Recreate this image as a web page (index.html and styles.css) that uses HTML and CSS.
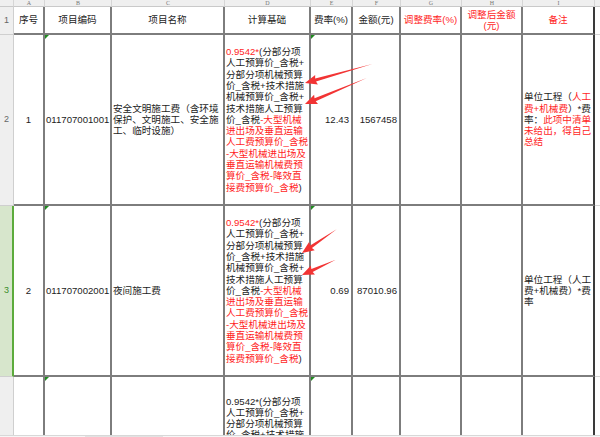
FILE: index.html
```html
<!DOCTYPE html>
<html lang="zh">
<head>
<meta charset="utf-8">
<link rel="stylesheet" href="styles.css">
</head>
<body>
<div class="sheet">
  <div class="ch corner"></div>
  <div class="ch">A</div><div class="ch">B</div><div class="ch">C</div><div class="ch">D</div><div class="ch">E</div><div class="ch">F</div><div class="ch">G</div><div class="ch">H</div><div class="ch">I</div><div class="ch last"></div>

  <div class="rh">1</div>
  <div class="c ctr">序号</div>
  <div class="c ctr">项目编码</div>
  <div class="c ctr">项目名称</div>
  <div class="c ctr">计算基础</div>
  <div class="c ctr">费率(%)</div>
  <div class="c ctr">金额(元)</div>
  <div class="c ctr r">调整费率(%)</div>
  <div class="c ctr r"><div class="tc">调整后金额<br>(元)</div></div>
  <div class="c ctr r edge">备注</div>
  <div class="x"></div>

  <div class="rh">2</div>
  <div class="c ctr">1</div>
  <div class="c m">011707001001</div>
  <div class="c"><div>安全文明施工费（含环境<br>保护、文明施工、安全施<br>工、临时设施）</div></div>
  <div class="c"><div><span class="r">0.9542*</span>(分部分项<br>人工预算价_含税+<br>分部分项机械预算<br>价_含税+技术措施<br>机械预算价_含税+<br>技术措施人工预算<br>价_含税<span class="r">-大型机械<br>进出场及垂直运输<br>人工费预算价_含税<br>-大型机械进出场及<br>垂直运输机械费预<br>算价_含税-降效直<br>接费预算价_含税</span>)</div></div>
  <div class="c num m">12.43</div>
  <div class="c num">1567458</div>
  <div class="c"></div>
  <div class="c"></div>
  <div class="c edge"><div>单位工程（<span class="r">人工</span><br><span class="r">费+机械费</span>）*费<br>率：<span class="r">此项中清单</span><br><span class="r">未给出，得自己</span><br><span class="r">总结</span></div></div>
  <div class="x"></div>

  <div class="rh sel">3</div>
  <div class="c ctr">2</div>
  <div class="c m">011707002001</div>
  <div class="c">夜间施工费</div>
  <div class="c"><div><span class="r">0.9542*</span>(分部分项<br>人工预算价_含税+<br>分部分项机械预算<br>价_含税+技术措施<br>机械预算价_含税+<br>技术措施人工预算<br>价_含税<span class="r">-大型机械<br>进出场及垂直运输<br>人工费预算价_含税<br>-大型机械进出场及<br>垂直运输机械费预<br>算价_含税-降效直<br>接费预算价_含税</span>)</div></div>
  <div class="c num m">0.69</div>
  <div class="c num">87010.96</div>
  <div class="c"></div>
  <div class="c"></div>
  <div class="c edge"><div>单位工程（人工<br>费+机械费）*费<br>率</div></div>
  <div class="x"></div>

  <div class="rh"></div>
  <div class="c ctr"></div>
  <div class="c m"></div>
  <div class="c"></div>
  <div class="c"><div>0.9542*(分部分项<br>人工预算价_含税+<br>分部分项机械预算<br>价_含税+技术措施<br>机械预算价_含税+<br>技术措施人工预算<br>价_含税-大型机械<br>进出场及垂直运输<br>人工费预算价_含税<br>-大型机械进出场及<br>垂直运输机械费预<br>算价_含税-降效直<br>接费预算价_含税)</div></div>
  <div class="c num m"></div>
  <div class="c num"></div>
  <div class="c"></div>
  <div class="c"></div>
  <div class="c edge"></div>
  <div class="x"></div>
</div>
<div class="bar"><div class="seg"></div></div>

<svg class="arrows" width="600" height="437" viewBox="0 0 600 437">
  <g fill="#f23434">
    <polygon transform="translate(305 83) rotate(-15.8)" points="0,0 12,-5 11,-1.6 70,0 11,1.6 12,5"/>
    <polygon transform="translate(305 104) rotate(-22.8)" points="0,0 12,-5 11,-1.6 67,0 11,1.6 12,5"/>
    <polygon transform="translate(302 253) rotate(-34.4)" points="0,0 12,-5 11,-1.6 42,0 11,1.6 12,5"/>
    <polygon transform="translate(302 275) rotate(-24.4)" points="0,0 12,-5 11,-1.6 37,0 11,1.6 12,5"/>
  </g>
</svg>
</body>
</html>
```
FILE: styles.css
```css
* { box-sizing: border-box; margin: 0; padding: 0; }
html, body { width: 600px; height: 437px; overflow: hidden; background: #fff; }
body {
  font-family: "Liberation Sans", "Noto Sans CJK SC", sans-serif;
  font-size: 9.6px;
  line-height: 11.3px;
  color: #1c1c1c;
  display: flex;
  flex-direction: column;
  position: relative;
}
.sheet {
  display: grid;
  grid-template-columns: 14px 31px 67px 113px 86px 42px 48px 61px 61px 72px 5px;
  grid-template-rows: 7px 28px 171px 171px 186px;
  height: 435px;
  overflow: hidden;
  flex: none;
}
.ch {
  background: #efefef;
  border-right: 1px solid #d6d6d6;
  border-bottom: 1px solid #c9c9c9;
  color: #777;
  font-family: "Liberation Serif", serif;
  font-size: 6px;
  line-height: 6px;
  display: flex;
  justify-content: center;
  align-items: center;
}
.ch.last { border-right: 0; }
.rh {
  background: #efefef;
  border-right: 1px solid #cfcfcf;
  border-bottom: 1px solid #cfcfcf;
  color: #666;
  font-size: 9px;
  display: flex;
  align-items: center;
  padding-left: 4px;
}
.rh.sel {
  background: #d7e6cc;
  color: #3d8f2b;
  border-right: 2px solid #5cab3c;
}
.c {
  border-right: 2px solid #7d7d7d;
  border-bottom: 2px solid #7d7d7d;
  display: flex;
  align-items: center;
  white-space: nowrap;
  padding: 0 1px;
  position: relative;
}
.c.edge { border-right: 2px solid #3a3a3a; }
.ctr { justify-content: center; }
.tc { text-align: center; }
.num { justify-content: flex-end; padding-right: 2px; }
.x { border-bottom: 1px solid #d6d6d6; }
.r { color: #ff1e1e; }
.m::before {
  content: "";
  position: absolute;
  left: 0;
  top: 0;
  border-top: 4px solid #1f8a1f;
  border-right: 4px solid transparent;
}
.bar {
  height: 2px;
  background: #f6f6f6;
  border-top: 1px solid #d8d8d8;
  display: flex;
  flex: none;
}
.seg { margin-left: 85px; width: 78px; background: #e2e2e2; }
.arrows { position: absolute; left: 0; top: 0; pointer-events: none; }
```
